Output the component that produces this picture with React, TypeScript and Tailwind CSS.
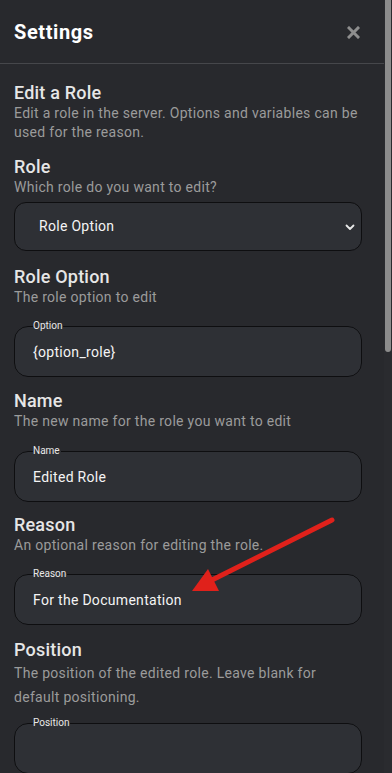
import React from 'react';

const font = { fontFamily: 'Roboto, "Noto Sans", sans-serif' };

function Section({ title, desc, wide }: { title: string; desc: string; wide?: boolean }) {
  return (
    <div>
      <h3 className="text-[18px] leading-[22px] font-medium tracking-[0.2px] text-[#e6e6e6]">{title}</h3>
      <p
        className={`text-[14px] tracking-[0.3px] text-[#9b9b9b] ${
          wide ? 'leading-[24px] max-w-[320px]' : 'leading-[19px]'
        }`}
      >
        {desc}
      </p>
    </div>
  );
}

function Field({ label, value }: { label: string; value?: string }) {
  return (
    <fieldset className="border border-[#0e0e10] rounded-[14px] bg-[#2e3035] px-[18px] pb-[14px]">
      <legend className="text-[10px] leading-[12px] text-[#e8e8e8] px-0 pr-[1px]">{label}</legend>
      <div className="pt-[10px] h-[30px] text-[14px] leading-[20px] tracking-[0.3px] text-[#f4f4f4]">
        {value}
      </div>
    </fieldset>
  );
}

export default function App() {
  return (
    <div className="relative flex w-[392px] h-[773px] overflow-hidden bg-[#28292d]" style={font}>
      {/* Panel */}
      <div className="flex-1 min-w-0">
        {/* Header */}
        <div className="h-[64px] flex items-center justify-between pl-[14px] pr-[24px] border-b border-[#46474b]">
          <h2 className="text-[20px] font-bold tracking-[0.6px] text-white">Settings</h2>
          <svg width="13" height="13" viewBox="0 0 13 13" className="mt-[1px]">
            <path d="M2 2 L11 11 M11 2 L2 11" stroke="#8e8e8e" strokeWidth="3" strokeLinecap="square" />
          </svg>
        </div>

        <div className="pl-[14px] pr-[22px] pt-[18px]">
          <Section
            title="Edit a Role"
            desc="Edit a role in the server. Options and variables can be used for the reason."
          />

          <div className="mt-[14px]">
            <Section title="Role" desc="Which role do you want to edit?" />
            <div className="mt-[5px] h-[49px] rounded-[12px] border border-[#0e0e10] bg-[#2e3035] flex items-center justify-between pl-[24px] pr-[6px]">
              <span className="text-[14px] tracking-[0.3px] text-[#f4f4f4]">Role Option</span>
              <svg width="10" height="10" viewBox="0 0 10 10">
                <path d="M1.5 3.5 L5 7 L8.5 3.5" fill="none" stroke="#e8e8e8" strokeWidth="1.8" strokeLinecap="round" strokeLinejoin="round" />
              </svg>
            </div>
          </div>

          <div className="mt-[15px]">
            <Section title="Role Option" desc="The role option to edit" />
            <div className="mt-[13px]">
              <Field label="Option" value="{option_role}" />
            </div>
          </div>

          <div className="mt-[13px]">
            <Section title="Name" desc="The new name for the role you want to edit" />
            <div className="mt-[14px]">
              <Field label="Name" value="Edited Role" />
            </div>
          </div>

          <div className="mt-[12px]">
            <Section title="Reason" desc="An optional reason for editing the role." />
            <div className="mt-[13px]">
              <Field label="Reason" value="For the Documentation" />
            </div>
          </div>

          <div className="mt-[14px]">
            <Section
              title="Position"
              desc="The position of the edited role. Leave blank for default positioning."
              wide
            />
            <div className="mt-[8px]">
              <Field label="Position" />
            </div>
          </div>
        </div>
      </div>

      {/* Scrollbar */}
      <div className="w-[8px] shrink-0 bg-[#2a2b2f]">
        <div className="ml-[1px] w-[6px] h-[352px] bg-[#8c8c8c] rounded-b-[3px]" />
      </div>

      {/* Red annotation arrow */}
      <svg className="absolute left-0 top-0 pointer-events-none" width="392" height="773">
        <line x1="332" y1="520" x2="212" y2="580" stroke="#e0211b" strokeWidth="5" strokeLinecap="round" />
        <polygon points="192,591 208,569 219,591" fill="#e0211b" />
      </svg>
    </div>
  );
}
